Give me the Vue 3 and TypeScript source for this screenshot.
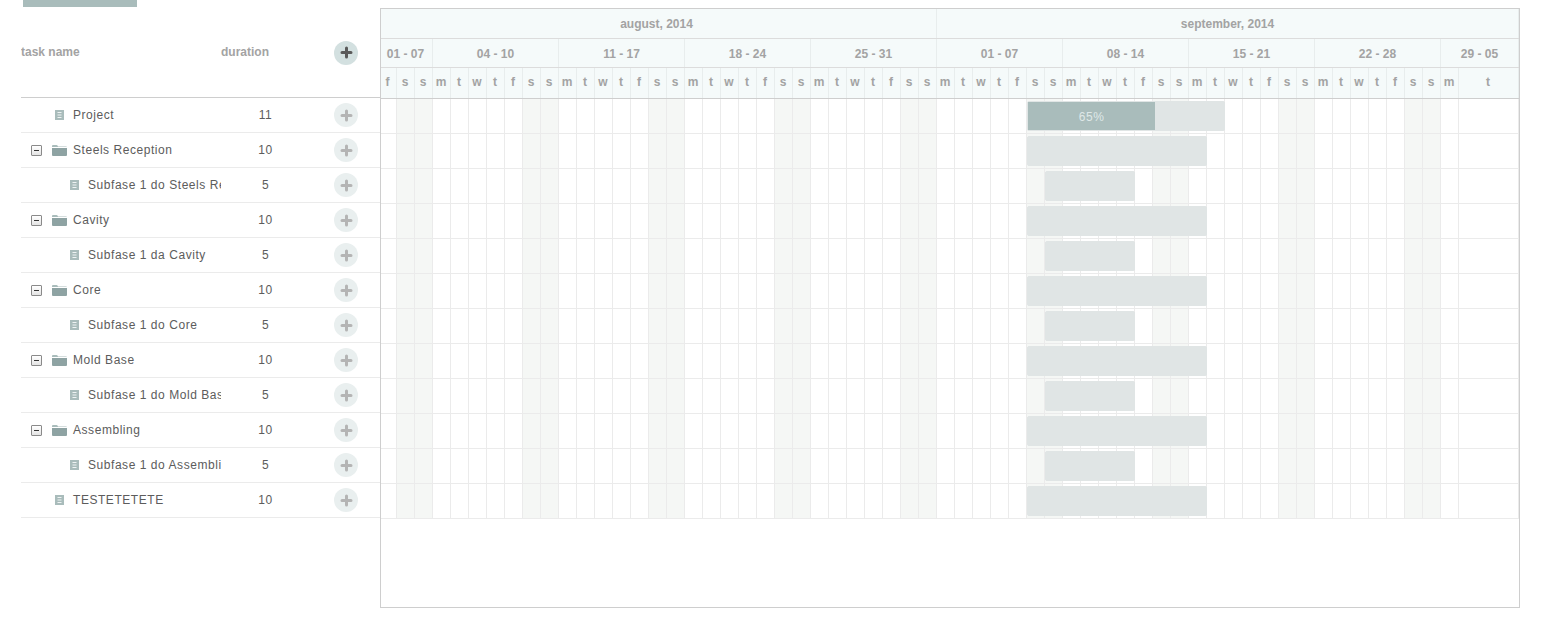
<template>
  <div class="page">
    <div class="top-bar"></div>
    <div class="gantt">
      <div class="grid">
        <div class="grid-head">
          <div class="col-task">task name</div>
          <div class="col-duration">duration</div>
          <div class="col-add"><span class="add add-head"><svg width="13" height="13" viewBox="0 0 13 13"><path d="M6.500 2v9M2 6.500h9" /></svg></span></div>
        </div>
        <div v-for="task in tasks" :key="task.name" class="grid-row">
          <div class="col-task" :class="{ sub: task.level === 1 }">
            <span class="toggle-slot">
              <span v-if="task.folder" class="toggle"><i></i></span>
            </span>
            <span class="icon-slot">
              <svg v-if="task.folder" width="15" height="11" viewBox="0 0 15 11"><path d="M0 2V1q0-1 1-1h3.500q.8 0 1.200.7L6 1.500h8q1 0 1 1V2z" fill="#a9bcbb" /><path d="M0 3h15v7q0 1-1 1H1q-1 0-1-1z" fill="#8ea3a3" /></svg>
              <svg v-else width="9" height="10" viewBox="0 0 9 10"><rect width="9" height="10" fill="#a9bcbb" /><path d="M2.500 2.500h4M2.500 5h4M2.500 7.500h4" stroke="#eef3f3" fill="none" /></svg>
            </span>
            <span class="task-name">{{ task.name }}</span>
          </div>
          <div class="col-duration num">{{ task.duration }}</div>
          <div class="col-add"><span class="add"><svg width="13" height="13" viewBox="0 0 13 13"><path d="M6.500 2v9M2 6.500h9" /></svg></span></div>
        </div>
      </div>
      <div class="chart">
        <div class="scale months">
          <div v-for="m in months" :key="m.label" class="cell" :style="{ width: m.width + 'px' }">{{ m.label }}</div>
        </div>
        <div class="scale weeks">
          <div v-for="w in weeks" :key="w.key" class="cell" :style="{ width: w.width + 'px' }">{{ w.label }}</div>
        </div>
        <div class="scale days">
          <div v-for="d in days" :key="d.id" class="cell" :style="{ width: d.width + 'px' }">{{ d.letter }}</div>
        </div>
        <div v-for="task in tasks" :key="task.name" class="chart-row">
          <div v-for="d in days" :key="d.id" class="day-cell" :class="{ weekend: d.weekend }" :style="{ width: d.width + 'px' }"></div>
          <div class="bar" :style="{ left: barLeft(task) + 'px', width: task.duration * 18 + 'px' }">
            <div v-if="task.progress" class="progress" :style="{ width: task.progress + '%' }">{{ task.progress }}%</div>
          </div>
        </div>
      </div>
    </div>
  </div>
</template>

<script setup lang="ts">
interface Task {
  name: string;
  duration: number;
  level: number;
  folder: boolean;
  start: number;
  progress?: number;
}

const letters = ["m", "t", "w", "t", "f", "s", "s"];

// day 0 is august 1st, a friday
const days = Array.from({ length: 61 }, (_, i) => {
  const weekday = (i + 4) % 7;
  let width = 18;
  if (i === 0) width = 16;
  if (i === 60) width = 60;
  return { id: i, letter: letters[weekday], weekend: weekday > 4, width };
});

const months = [
  { label: "august, 2014", width: 556 },
  { label: "september, 2014", width: 582 },
];

const weekLabels = [
  "01 - 07", "04 - 10", "11 - 17", "18 - 24", "25 - 31",
  "01 - 07", "08 - 14", "15 - 21", "22 - 28", "29 - 05",
];
const weeks = weekLabels.map((label, i) => {
  let width = 126;
  if (i === 0) width = 52;
  if (i === 9) width = 78;
  return { key: i, label, width };
});

const tasks: Task[] = [
  { name: "Project", duration: 11, level: 0, folder: false, start: 36, progress: 65 },
  { name: "Steels Reception", duration: 10, level: 0, folder: true, start: 36 },
  { name: "Subfase 1 do Steels Reception", duration: 5, level: 1, folder: false, start: 37 },
  { name: "Cavity", duration: 10, level: 0, folder: true, start: 36 },
  { name: "Subfase 1 da Cavity", duration: 5, level: 1, folder: false, start: 37 },
  { name: "Core", duration: 10, level: 0, folder: true, start: 36 },
  { name: "Subfase 1 do Core", duration: 5, level: 1, folder: false, start: 37 },
  { name: "Mold Base", duration: 10, level: 0, folder: true, start: 36 },
  { name: "Subfase 1 do Mold Base", duration: 5, level: 1, folder: false, start: 37 },
  { name: "Assembling", duration: 10, level: 0, folder: true, start: 36 },
  { name: "Subfase 1 do Assembling", duration: 5, level: 1, folder: false, start: 37 },
  { name: "TESTETETETE", duration: 10, level: 0, folder: false, start: 36 },
];

// first cell is 2px short of a full day
function barLeft(task: Task) {
  return task.start * 18 - 2;
}
</script>

<style>
html,
body {
  margin: 0;
  background: #fff;
}
</style>

<style scoped>
.page {
  font-family: "Liberation Sans", Arial, sans-serif;
  font-size: 12px;
  height: 631px;
  overflow: hidden;
}
.top-bar {
  width: 114px;
  height: 7px;
  margin-left: 23px;
  background: #a9bcbb;
}
.gantt {
  display: flex;
  margin: 1px 0 0 21px;
}
.grid {
  width: 359px;
  flex: none;
}
.grid-head {
  display: flex;
  align-items: center;
  height: 89px;
  border-bottom: 1px solid #cecece;
  font-weight: bold;
  color: #a3a3a3;
}
.grid-head .col-task,
.grid-head .col-duration {
  padding-bottom: 2px;
}
.grid-row {
  display: flex;
  align-items: center;
  height: 34px;
  border-bottom: 1px solid #ebebeb;
  color: #5c5c5c;
  letter-spacing: 0.55px;
}
.col-task {
  width: 200px;
  flex: none;
  display: flex;
  align-items: center;
  overflow: hidden;
  white-space: nowrap;
}
.grid-row .col-task {
  padding-left: 10px;
  box-sizing: border-box;
}
.grid-row .col-task.sub {
  padding-left: 25px;
}
.col-duration {
  width: 89px;
  flex: none;
}
.col-duration.num {
  text-align: center;
}
.col-add {
  width: 70px;
  flex: none;
  box-sizing: border-box;
  padding-left: 2px;
  display: flex;
  justify-content: center;
}
.toggle-slot {
  width: 10px;
  height: 11px;
  flex: none;
  margin-right: 11px;
}
.toggle {
  display: block;
  position: relative;
  width: 9px;
  height: 9px;
  border: 1px solid #8a8a8a;
  border-radius: 1px;
  background: linear-gradient(#fff, #e4e4e4);
}
.toggle i {
  position: absolute;
  left: 2px;
  top: 4px;
  width: 5px;
  height: 1px;
  background: #333;
}
.icon-slot {
  width: 15px;
  flex: none;
  display: flex;
  justify-content: center;
  margin-right: 6px;
}
.icon-slot svg {
  display: block;
}
.add {
  width: 24px;
  height: 24px;
  border-radius: 50%;
  background: #e9efef;
  display: flex;
  align-items: center;
  justify-content: center;
}
.add path {
  stroke: #b4b4b4;
  stroke-width: 3;
  stroke-linecap: round;
  fill: none;
}
.add-head {
  background: #d3e0e0;
}
.add-head path {
  stroke: #5a5a5a;
}
.chart {
  width: 1138px;
  height: 598px;
  flex: none;
  border: 1px solid #cecece;
}
.scale {
  display: flex;
  background: #f5fafa;
  border-bottom: 1px solid #dcdcdc;
  font-weight: bold;
  color: #a3a3a3;
}
.scale .cell {
  box-sizing: border-box;
  flex: none;
  border-right: 1px solid #e8eded;
  text-align: center;
  line-height: 29px;
}
.scale .cell:first-child {
  padding-right: 2px;
}
.months .cell {
  height: 29px;
  line-height: 30px;
}
.scale.months .cell:first-child {
  padding-right: 4px;
}
.weeks .cell {
  height: 28px;
  line-height: 30px;
}
.days {
  border-bottom-color: #cecece;
}
.days .cell {
  height: 30px;
  padding-right: 1px;
}
.chart-row {
  position: relative;
  display: flex;
  height: 34px;
  border-bottom: 1px solid #ebebeb;
}
.day-cell {
  box-sizing: border-box;
  flex: none;
  border-right: 1px solid #ebebeb;
}
.day-cell.weekend {
  background: #f5f7f5;
}
.bar {
  position: absolute;
  top: 2px;
  box-sizing: border-box;
  height: 30px;
  border: 1px solid #e0e5e5;
  border-radius: 2px;
  background: #e0e5e5;
}
.progress {
  height: 28px;
  line-height: 30px;
  text-align: center;
  background: #a9bcbb;
  color: #dfe8e8;
  letter-spacing: 0.6px;
}
</style>
